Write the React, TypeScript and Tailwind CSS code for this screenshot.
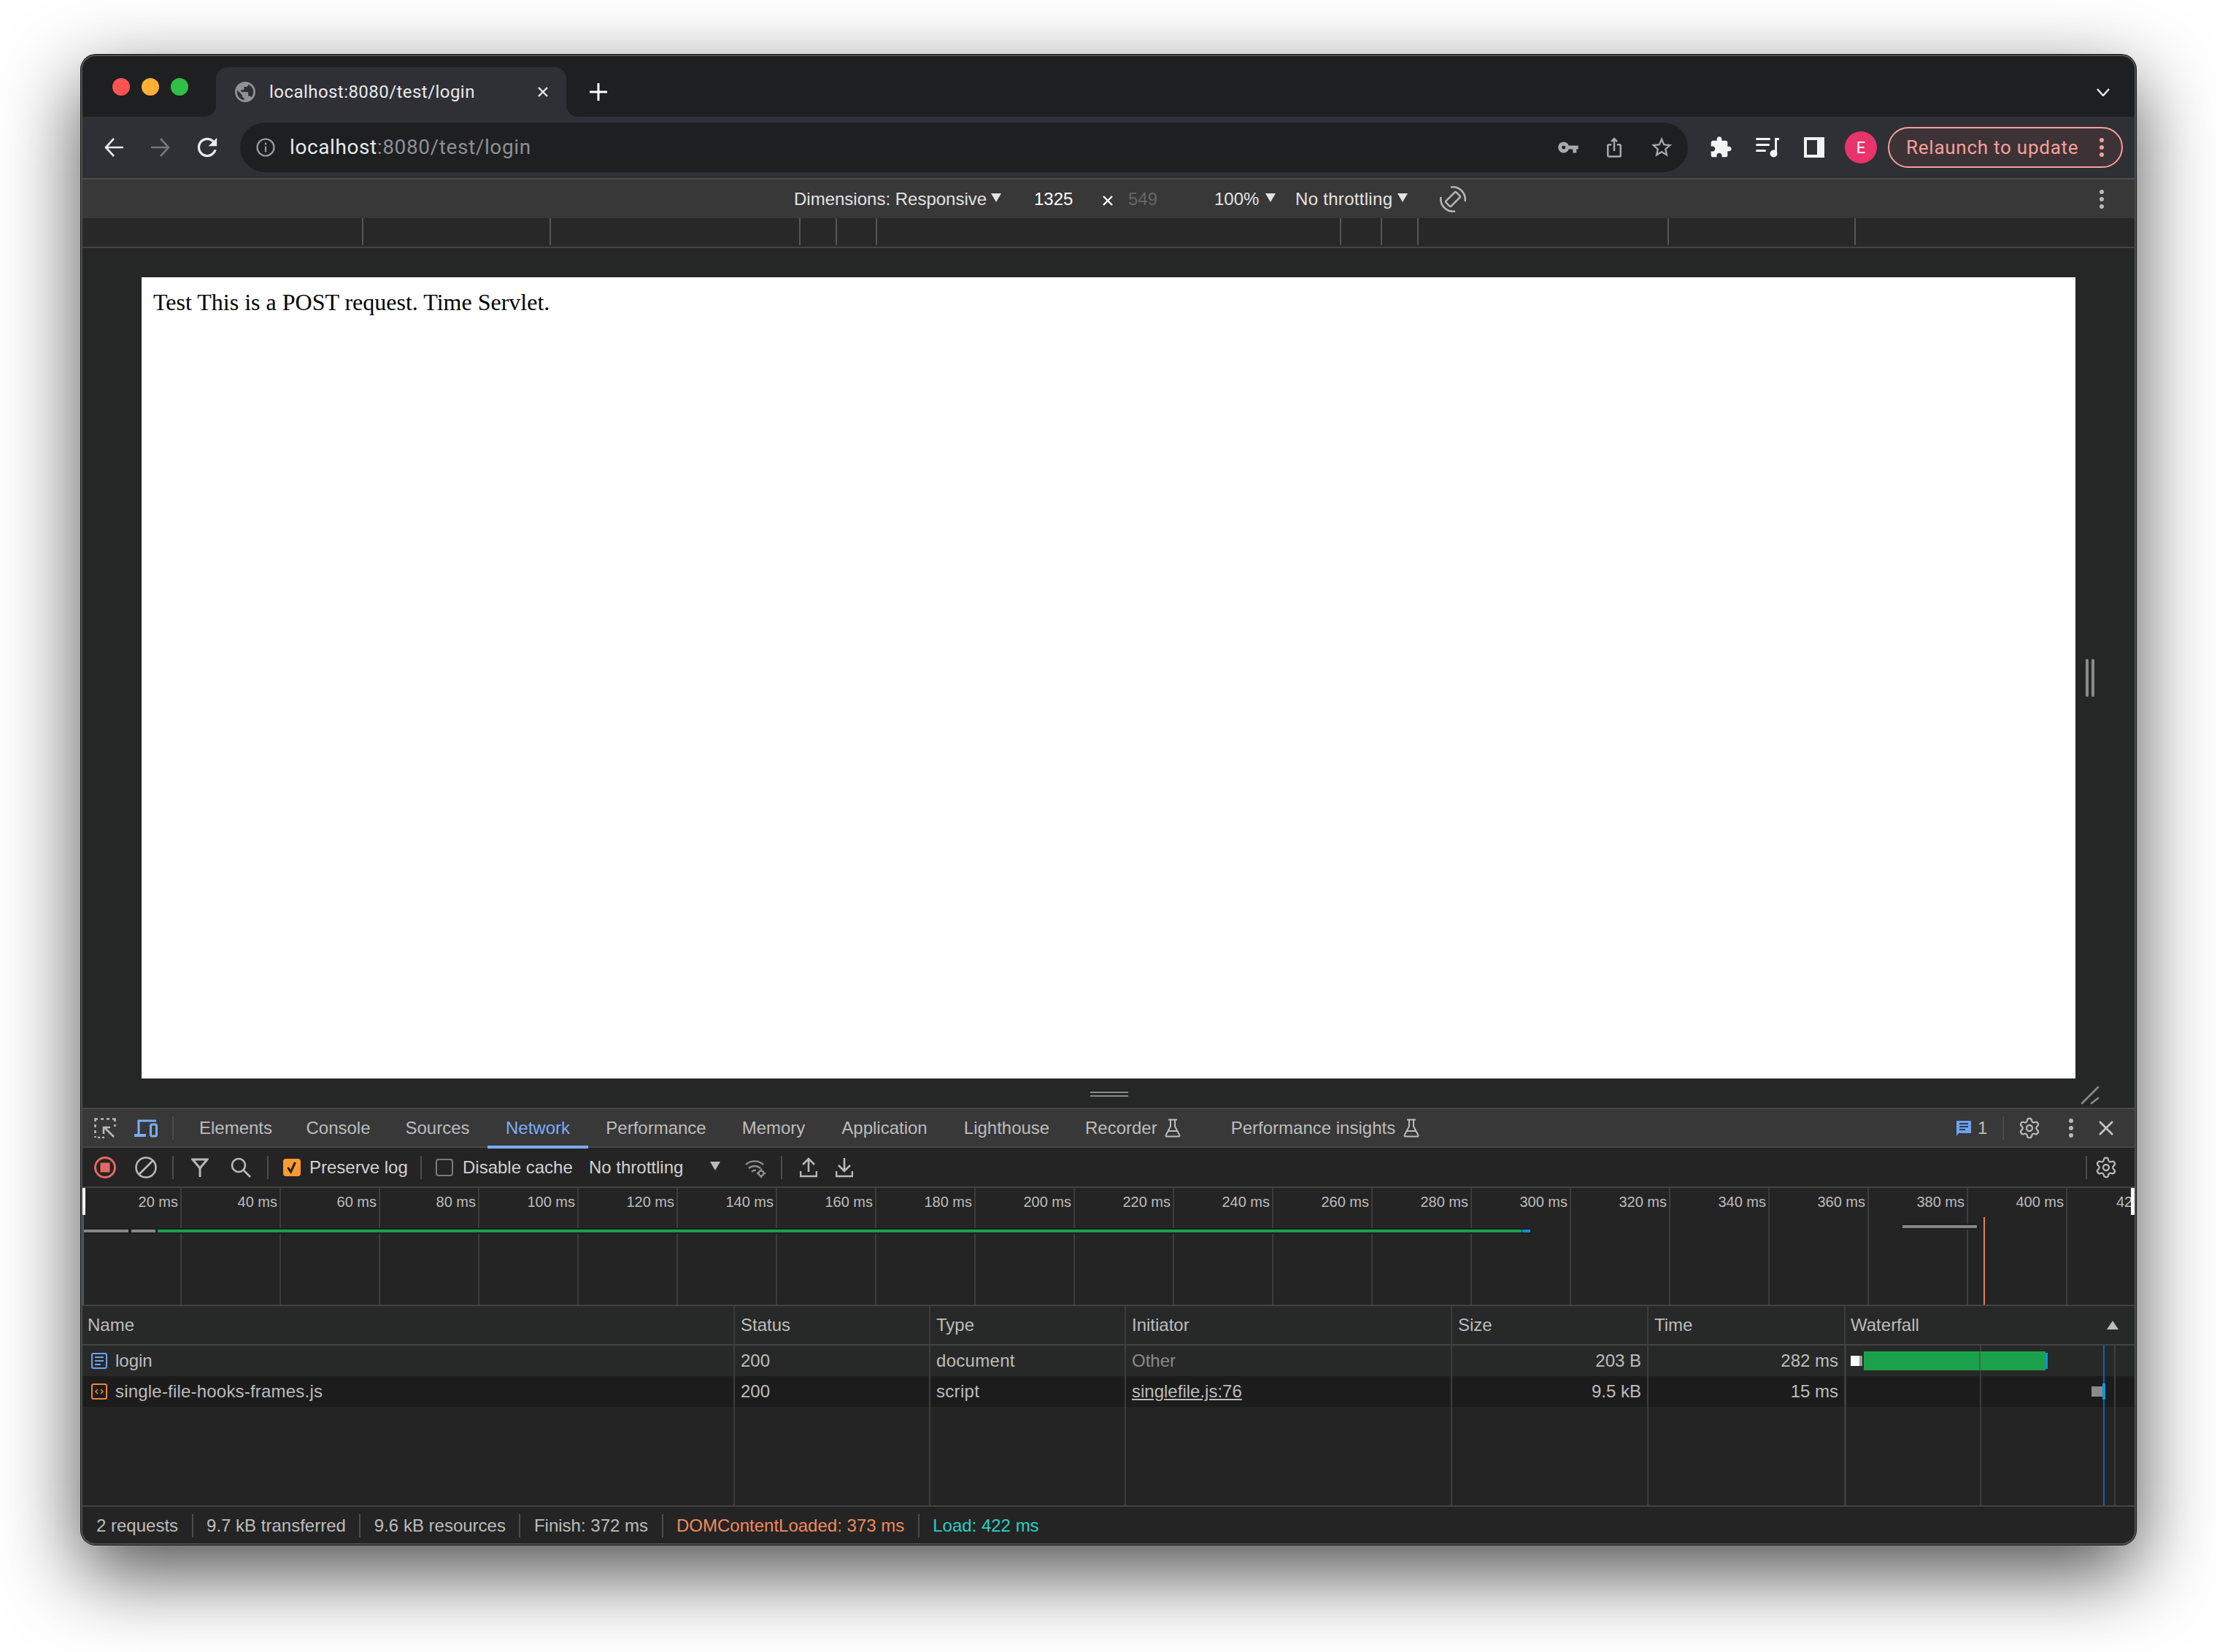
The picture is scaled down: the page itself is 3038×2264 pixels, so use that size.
import React from "react";
import { Settings } from "lucide-react";

const M = ({ d, w, c, box = "0 0 24 24", cls = "" }: { d: string; w: number; c: string; box?: string; cls?: string }) => (
  <svg width={w} height={w} viewBox={box} className={"shrink-0 " + cls}>
    <path d={d} fill={c} fillRule="evenodd" />
  </svg>
);

const Tri = ({ cls = "", c = "#e3e3e3" }: { cls?: string; c?: string }) => (
  <svg width={14} height={12} viewBox="0 0 14 12" className={"shrink-0 " + cls}>
    <polygon points="0,0 14,0 7,12" fill={c} />
  </svg>
);

const Dots = ({ c = "#b9b9b9", cls = "" }: { c?: string; cls?: string }) => (
  <svg width={8} height={28} viewBox="0 0 8 28" className={"shrink-0 " + cls}>
    <circle cx="4" cy="4" r="3" fill={c} />
    <circle cx="4" cy="14" r="3" fill={c} />
    <circle cx="4" cy="24" r="3" fill={c} />
  </svg>
);

const Sep = ({ cls = "" }: { cls?: string }) => <div className={"w-[2px] h-[32px] shrink-0 bg-[#4c4c4c] " + cls} />;

const Flask = ({ cls = "" }: { cls?: string }) => (
  <svg width={22} height={26} viewBox="0 0 22 26" fill="none" stroke="#bdbdbd" strokeWidth="2" className={"shrink-0 " + cls}>
    <path d="M5 1.5h12M8 1.5v9L1.8 22.5a1.2 1.2 0 0 0 1 2h16.4a1.2 1.2 0 0 0 1-2L14 10.5v-9M5 17h12" />
  </svg>
);

const Gear = ({ cls = "" }: { cls?: string }) => <Settings size={32} strokeWidth={1.7} color="#b9b9b9" className={"shrink-0 " + cls} />;

const rulerMarks = [496, 753, 1095, 1145, 1200, 1836, 1892, 1942, 2285, 2541];
const overviewLabels = [20, 40, 60, 80, 100, 120, 140, 160, 180, 200, 220, 240, 260, 280, 300, 320, 340, 360, 380, 400];

const tabs: [string, number][] = [
  ["Elements", 146],
  ["Console", 135],
  ["Sources", 137],
  ["Network", 138],
  ["Performance", 186],
  ["Memory", 136],
  ["Application", 168],
  ["Lighthouse", 167],
];

const cell = "flex items-center whitespace-nowrap border-r-2 border-[#3c3c3c] min-w-0";
const grid = "grid grid-cols-[896px_268px_268px_447px_269px_270px_1fr]";

function TitleBar() {
  return (
    <div className="flex h-[85px] shrink-0 bg-[#2f3035]">
      <div className="w-[185px] bg-[#1e1f21] rounded-br-[16px] flex gap-4 pl-[43px] pt-8">
        <div className="w-6 h-6 rounded-full bg-[#ff5352]" />
        <div className="w-6 h-6 rounded-full bg-[#ffb035]" />
        <div className="w-6 h-6 rounded-full bg-[#2fc145]" />
      </div>
      <div className="w-[480px] bg-[#1e1f21] pt-[17px]">
        <div className="h-[68px] rounded-t-[16px] bg-[#2f3035] flex items-center pl-[26px] pr-6">
          <M
            w={28}
            c="#8e9297"
            box="2 2 20 20"
            d="M12 2C6.48 2 2 6.48 2 12s4.48 10 10 10 10-4.48 10-10S17.52 2 12 2zm-1 17.93c-3.95-.49-7-3.85-7-7.93 0-.62.08-1.21.21-1.79L9 15v1c0 1.1.9 2 2 2v1.93zm6.9-2.54c-.26-.81-1-1.39-1.9-1.39h-1v-3c0-.55-.45-1-1-1H8v-2h2c.55 0 1-.45 1-1V7h2c1.1 0 2-.9 2-2v-.41c2.93 1.19 5 4.06 5 7.41 0 2.08-.8 3.97-2.1 5.39z"
          />
          <span className="ml-[19px] text-[24px] tracking-[0.45px] text-[#e8eaed] font-['Roboto',sans-serif] whitespace-nowrap">localhost:8080/test/login</span>
          <svg width={16} height={16} viewBox="0 0 16 16" className="ml-auto shrink-0" stroke="#e8eaed" strokeWidth="2.4">
            <path d="M2 2l12 12M14 2L2 14" />
          </svg>
        </div>
      </div>
      <div className="flex-1 bg-[#1e1f21] rounded-bl-[16px] flex items-center pt-[17px] pl-8 pr-[36px]">
        <svg width={24} height={24} viewBox="0 0 24 24" stroke="#fff" strokeWidth="3" className="shrink-0">
          <path d="M12 0v24M0 12h24" />
        </svg>
        <svg width={18} height={11} viewBox="0 0 18 11" fill="none" stroke="#e8eaed" strokeWidth="2.4" className="ml-auto shrink-0">
          <path d="M1 1l8 9 8-9" />
        </svg>
      </div>
    </div>
  );
}

function Toolbar() {
  return (
    <div className="flex items-center h-[86px] shrink-0 bg-[#2f3035] border-b-2 border-[#4b4c4f] pl-[31px]">
      <svg width={28} height={28} viewBox="0 0 28 28" fill="none" stroke="#e8eaed" strokeWidth="2.6" className="shrink-0">
        <path d="M3 14h24M14 2L3 14l11 12" />
      </svg>
      <svg width={28} height={28} viewBox="0 0 28 28" fill="none" stroke="#75767a" strokeWidth="2.6" className="ml-9 shrink-0">
        <path d="M25 14H1M14 2l11 12-11 12" />
      </svg>
      <M
        cls="ml-9"
        w={28}
        c="#e8eaed"
        box="3.5 3.5 17 17"
        d="M17.65 6.35C16.2 4.9 14.21 4 12 4c-4.42 0-7.99 3.58-7.99 8s3.57 8 7.99 8c3.73 0 6.84-2.55 7.73-6h-2.08c-.82 2.33-3.04 4-5.65 4-3.31 0-6-2.69-6-6s2.69-6 6-6c1.66 0 3.14.69 4.22 1.78L13 11h7V4l-2.35 2.35z"
      />
      <div className="ml-[31px] w-[1984px] h-[68px] rounded-full bg-[#1e1f21] flex items-center pl-[22px] pr-[19px] shrink-0">
        <svg width={26} height={26} viewBox="0 0 26 26" fill="none" stroke="#9a9ca0" strokeWidth="2.2" className="shrink-0">
          <circle cx="13" cy="13" r="11.5" />
          <path d="M13 11.5v8M13 6.5v3" />
        </svg>
        <span className="ml-5 text-[28px] tracking-[0.6px] font-['Roboto',sans-serif] whitespace-nowrap text-[#e8eaed]">
          localhost<span className="text-[#8e9094]">:8080/test/login</span>
        </span>
        <M
          cls="ml-auto"
          w={30}
          c="#a9a9aa"
          d="M12.65 10C11.83 7.67 9.61 6 7 6c-3.31 0-6 2.69-6 6s2.69 6 6 6c2.61 0 4.83-1.67 5.65-4H17v4h4v-4h2v-4H12.65zM7 14c-1.1 0-2-.9-2-2s.9-2 2-2 2 .9 2 2-.9 2-2 2z"
        />
        <M
          cls="ml-[33px]"
          w={30}
          c="#a9a9aa"
          d="M16 5l-1.42 1.42-1.59-1.59V16h-1.98V4.83L9.42 6.42 8 5l4-4 4 4zm4 5v11c0 1.1-.9 2-2 2H6c-1.11 0-2-.9-2-2V10c0-1.11.89-2 2-2h3v2H6v11h12V10h-3V8h3c1.1 0 2 .89 2 2z"
        />
        <M
          cls="ml-[33px]"
          w={34}
          c="#a9a9aa"
          d="M22 9.24l-7.19-.62L12 2 9.19 8.63 2 9.24l5.46 4.73L5.82 21 12 17.27 18.18 21l-1.63-7.03L22 9.24zM12 15.4l-3.76 2.27 1-4.28-3.32-2.88 4.38-.38L12 6.1l1.71 4.04 4.38.38-3.32 2.88 1 4.28L12 15.4z"
        />
      </div>
      <M
        cls="ml-[29px]"
        w={32}
        c="#f1f3f4"
        d="M20.5 11H19V7c0-1.1-.9-2-2-2h-4V3.5C13 2.12 11.88 1 10.5 1S8 2.12 8 3.5V5H4c-1.1 0-1.99.9-1.99 2v3.8H3.5c1.49 0 2.7 1.21 2.7 2.7s-1.21 2.7-2.7 2.7H2V20c0 1.1.9 2 2 2h3.8v-1.5c0-1.49 1.21-2.7 2.7-2.7 1.49 0 2.7 1.21 2.7 2.7V22H17c1.1 0 2-.9 2-2v-4h1.5c1.38 0 2.5-1.12 2.5-2.5S21.88 11 20.5 11z"
      />
      <svg width={32} height={28} viewBox="0 0 32 28" fill="#f1f3f4" className="ml-8 shrink-0">
        <rect x="0" y="1" width="20" height="3" rx="1.5" />
        <rect x="0" y="9" width="19" height="3" rx="1.5" />
        <rect x="0" y="17" width="14" height="3" rx="1.5" />
        <path d="M26 1h6v3h-3v19h-3z" />
        <circle cx="24.5" cy="22.5" r="5" />
      </svg>
      <svg width={28} height={28} viewBox="0 0 28 28" className="ml-[34px] shrink-0">
        <path fillRule="evenodd" fill="#f1f3f4" d="M0 0h28v28H0zM4 4v20h14V4z" />
      </svg>
      <div className="ml-7 w-11 h-11 rounded-full bg-[#e8336b] flex items-center justify-center text-white text-[22px] font-['Roboto',sans-serif] shrink-0">E</div>
      <div className="ml-[15px] w-[322px] h-[56px] rounded-full border-2 border-[#f5a09b] bg-[#3d3337] flex items-center pl-[23px] text-[#f5a09b] text-[26px] tracking-[0.75px] font-['Roboto',sans-serif] whitespace-nowrap shrink-0">
        Relaunch to update
        <Dots c="#f5a09b" cls="ml-auto mr-[23px]" />
      </div>
    </div>
  );
}

function DeviceBar() {
  return (
    <div className="flex items-center h-[53px] shrink-0 bg-[#383838] pl-[977px] pr-[43px] text-[24px] text-[#e3e3e3] font-['Liberation_Sans',sans-serif] whitespace-nowrap">
      <span className="w-[263px] shrink-0">Dimensions: Responsive</span>
      <Tri cls="ml-[7px] -mt-1" />
      <span className="ml-[45px] w-[52px] shrink-0 text-white">1325</span>
      <svg width={14} height={14} viewBox="0 0 14 14" stroke="#fff" strokeWidth="2.4" className="ml-[42px] shrink-0 mt-1">
        <path d="M1 1l12 12M13 1L1 13" />
      </svg>
      <span className="ml-[21px] w-[39px] shrink-0 text-[#666]">549</span>
      <span className="ml-[79px] w-[60px] shrink-0">100%</span>
      <Tri cls="ml-[10px] -mt-1" />
      <span className="ml-[27px] w-[131px] shrink-0 tracking-[0.3px]">No throttling</span>
      <Tri cls="ml-[9px] -mt-1" />
      <svg width={38} height={38} viewBox="0 0 38 38" fill="none" stroke="#b5b5b5" strokeWidth="2.6" className="ml-[43px] shrink-0">
        <rect x="14" y="9" width="10" height="20" rx="2" transform="rotate(45 19 19)" />
        <path d="M16 2.5a17 17 0 0 1 19.5 19.5M22 35.500A17 17 0 0 1 2.500 16" />
      </svg>
      <Dots cls="ml-auto" />
    </div>
  );
}

function Ruler() {
  return (
    <div className="flex h-[41px] shrink-0 bg-[#272827] border-b-2 border-[#434343]">
      {rulerMarks.map((x, i) => (
        <div
          key={x}
          className="h-[37px] shrink-0 border-r-2 border-[#565656]"
          style={{ width: x + 2 - (i === 0 ? 111 : rulerMarks[i - 1] + 2) }}
        />
      ))}
    </div>
  );
}

function PageArea() {
  return (
    <div className="flex flex-col h-[1178px] shrink-0 bg-[#252626] pt-10">
      <div className="flex h-[1098px] shrink-0 pl-[83px]">
        <div className="w-[2650px] bg-white p-4 text-[32px] leading-[37px] text-black font-['Liberation_Serif',serif] whitespace-nowrap">
          Test This is a POST request. Time Servlet.
        </div>
        <div className="flex flex-1 items-center gap-1 pl-[14px]">
          <div className="w-1 h-[52px] rounded-[2px] bg-[#8a8a8a]" />
          <div className="w-1 h-[52px] rounded-[2px] bg-[#8a8a8a]" />
        </div>
      </div>
      <div className="flex flex-1 pl-[1383px] pt-[18px]">
        <div className="w-[52px] h-[7px] border-y-2 border-[#8a8a8a] shrink-0" />
        <svg width={26} height={26} viewBox="0 0 26 26" stroke="#8a8a8a" strokeWidth="2.6" strokeLinecap="round" className="ml-[1305px] -mt-2 shrink-0">
          <path d="M2 24L24 2M15 24l9-7" />
        </svg>
      </div>
    </div>
  );
}

function DevtoolsTabs() {
  return (
    <div className="flex items-center h-[55px] shrink-0 bg-[#383838] border-y-2 border-[#474747] pl-[18px] pr-[30px] text-[24px] text-[#bdbdbd] font-['Liberation_Sans',sans-serif] whitespace-nowrap">
      <svg width={30} height={28} viewBox="0 0 30 28" fill="none" stroke="#b9b9b9" strokeWidth="2.6" className="shrink-0">
        <path d="M1.5 27v-2M1.5 21v-4M1.5 13V9M1.5 5V1.5H5M9 1.5h4M17 1.5h4M25 1.5h3.5V5M28.5 9v3M5 27h3M11 27h3" />
        <path d="M27 26L14 13M13 22v-9h9" />
      </svg>
      <svg width={32} height={26} viewBox="0 0 32 26" className="ml-[25px] shrink-0" fill="none">
        <path d="M30 3H6v19" stroke="#7cacf8" strokeWidth="3" />
        <rect x="0" y="21" width="16" height="4" fill="#7cacf8" />
        <rect x="22.5" y="8" width="8" height="16" rx="2" stroke="#7cacf8" strokeWidth="3" />
      </svg>
      <Sep cls="ml-5 mr-3" />
      {tabs.map(([t, w]) => (
        <div
          key={t}
          className={"relative self-stretch flex items-center justify-center shrink-0 " + (t === "Network" ? "text-[#7cacf8]" : "")}
          style={{ width: w }}
        >
          {t}
          {t === "Network" && <div className="absolute left-0 right-0 -bottom-[3px] h-1 bg-[#7cacf8]" />}
        </div>
      ))}
      <div className="flex items-center pl-6 shrink-0">
        Recorder
        <Flask cls="ml-[10px]" />
      </div>
      <div className="flex items-center ml-[69px] shrink-0">
        Performance insights
        <Flask cls="ml-[11px]" />
      </div>
      <svg width={20} height={24} viewBox="0 0 20 24" className="ml-auto shrink-0">
        <path d="M0 2h20v17H3l-3 4z" fill="#6ea1ef" />
        <path d="M4 6h12M4 10h12M4 14h8" stroke="#2b3a55" strokeWidth="2" />
      </svg>
      <span className="ml-[9px] w-3 shrink-0">1</span>
      <Sep cls="ml-[22px]" />
      <Gear cls="ml-[19px]" />
      <Dots cls="ml-[37px]" />
      <svg width={22} height={22} viewBox="0 0 22 22" stroke="#c4c4c4" strokeWidth="2.6" className="ml-[33px] shrink-0">
        <path d="M2 2l18 18M20 2L2 20" />
      </svg>
    </div>
  );
}

function NetworkToolbar() {
  return (
    <div className="flex items-center h-[55px] shrink-0 bg-[#242424] border-b-2 border-[#434343] pl-[18px] pr-[25px] text-[24px] text-[#d2d2d2] font-['Liberation_Sans',sans-serif] whitespace-nowrap">
      <svg width={30} height={30} viewBox="0 0 30 30" fill="none" className="shrink-0">
        <circle cx="15" cy="15" r="13.5" stroke="#e46962" strokeWidth="3" />
        <rect x="8.5" y="8.5" width="13" height="13" fill="#e46962" />
      </svg>
      <svg width={30} height={30} viewBox="0 0 30 30" fill="none" stroke="#b9b9b9" strokeWidth="2.6" className="ml-[26px] shrink-0">
        <circle cx="15" cy="15" r="13.5" />
        <path d="M24.5 5.5l-19 19" />
      </svg>
      <Sep cls="ml-[21px]" />
      <svg width={24} height={26} viewBox="0 0 24 26" fill="none" stroke="#b9b9b9" strokeWidth="3" className="ml-6 shrink-0">
        <path d="M2 2h20l-10 12zM12 13v13" />
      </svg>
      <svg width={28} height={28} viewBox="0 0 28 28" fill="none" stroke="#b9b9b9" strokeWidth="2.6" className="ml-[30px] shrink-0">
        <circle cx="11" cy="11" r="9" />
        <path d="M17.5 17.5L27 27" />
      </svg>
      <Sep cls="ml-[22px]" />
      <div className="ml-5 w-6 h-6 rounded-[4px] bg-[#ff9a2e] flex items-center justify-center shrink-0">
        <svg width={16} height={18} viewBox="0 0 16 18" fill="none" stroke="#202020" strokeWidth="3">
          <path d="M2.5 9l4 6 6-13" />
        </svg>
      </div>
      <span className="ml-3 w-[133px] shrink-0">Preserve log</span>
      <Sep cls="ml-[19px]" />
      <div className="ml-[19px] w-6 h-6 rounded-[4px] border-2 border-[#7a7a7a] shrink-0" />
      <span className="ml-[13px] w-[150px] shrink-0">Disable cache</span>
      <span className="ml-[23px] w-[132px] shrink-0">No throttling</span>
      <Tri cls="ml-[34px] -mt-1" c="#b9b9b9" />
      <svg width={28} height={28} viewBox="0 0 28 28" fill="none" stroke="#8f8f8f" strokeWidth="2.4" className="ml-[34px] shrink-0">
        <path d="M1 10a18 18 0 0 1 24 0M5 15a12 12 0 0 1 16 0M9 20a6 6 0 0 1 6-2" />
        <circle cx="22" cy="22" r="3.5" />
        <path d="M22 15.5v3M22 25.5v2.5M16 22h2.5M25.5 22h2.5" />
      </svg>
      <Sep cls="ml-[21px]" />
      <svg width={24} height={28} viewBox="0 0 24 28" fill="none" stroke="#b9b9b9" strokeWidth="2.6" className="ml-6 shrink-0">
        <path d="M12 20V3M4 10l8-8 8 8M1 19v7h22v-7" />
      </svg>
      <svg width={24} height={28} viewBox="0 0 24 28" fill="none" stroke="#b9b9b9" strokeWidth="2.6" className="ml-[25px] shrink-0">
        <path d="M12 1v17M4 11l8 8 8-8M1 19v7h22v-7" />
      </svg>
      <Sep cls="ml-auto" />
      <Gear cls="ml-[10px]" />
    </div>
  );
}

function Overview() {
  return (
    <div className="relative flex h-[162px] shrink-0 bg-[#242424] border-b-2 border-[#434343] text-[20px] leading-[30px] text-[#bdbdbd] font-['Liberation_Sans',sans-serif] whitespace-nowrap overflow-hidden">
      <div className="w-[138px] shrink-0 h-full border-r-2 border-[#3c3c3c] text-right pr-[3px] pt-1">20 ms</div>
      {overviewLabels.slice(1).map((n) => (
        <div key={n} className="w-[136px] shrink-0 h-full border-r-2 border-[#3c3c3c] text-right pr-[3px] pt-1">
          {n} ms
        </div>
      ))}
      <div className="w-[87px] shrink-0 h-full overflow-hidden pl-[67px] pt-1">420 ms</div>

      <div className="absolute left-0 top-[55px] w-[1989px] h-2 bg-[#1e1e1e]" />
      <div className="absolute left-[2px] top-[57px] w-[63px] h-1 bg-[#868686]" />
      <div className="absolute left-[69px] top-[57px] w-[33px] h-1 bg-[#868686]" />
      <div className="absolute left-[105px] top-[57px] w-[1869px] h-1 bg-[#1aa04a]" />
      <div className="absolute left-[1975px] top-[57px] w-[11px] h-1 bg-[#0a8ed8]" />
      <div className="absolute left-[2494px] top-[49px] w-[106px] h-2 bg-[#1e1e1e]" />
      <div className="absolute left-[2496px] top-[51px] w-[102px] h-1 bg-[#868686]" />
      <div className="absolute left-[2607px] top-10 bottom-0 w-[2px] bg-[#e8804e]" />
      <div className="absolute left-[2px] top-0 bottom-0 w-[2px] bg-[#48566a]" />
      <div className="absolute left-[2px] top-0 w-1 h-[37px] bg-white" />
      <div className="absolute left-[2809px] top-0 w-[5px] h-[37px] bg-white" />
    </div>
  );
}

function Table() {
  return (
    <div className="flex flex-col h-[275px] shrink-0 bg-[#242424] text-[24px] text-[#bdbdbd] font-['Liberation_Sans',sans-serif]">
      <div className={grid + " h-[54px] shrink-0 bg-[#272928] border-b-2 border-[#434343]"}>
        <div className={cell + " pl-[9px]"}>Name</div>
        <div className={cell + " pl-2"}>Status</div>
        <div className={cell + " pl-2"}>Type</div>
        <div className={cell + " pl-2"}>Initiator</div>
        <div className={cell + " pl-2"}>Size</div>
        <div className={cell + " pl-2"}>Time</div>
        <div className="flex items-center pl-[7px] pr-6">
          Waterfall
          <svg width={16} height={12} viewBox="0 0 16 12" className="ml-auto shrink-0">
            <polygon points="8,0 16,12 0,12" fill="#bdbdbd" />
          </svg>
        </div>
      </div>
      <div className="relative flex flex-col flex-1">
        <div className={grid + " h-[42px] shrink-0 bg-[#272928]"}>
          <div className={cell + " pl-[14px]"}>
            <svg width={22} height={22} viewBox="0 0 22 22" fill="none" className="shrink-0">
              <rect x="1" y="1" width="20" height="20" rx="2" stroke="#6ea1ef" strokeWidth="2" />
              <path d="M5 6h12M5 11h12M5 16h8" stroke="#6ea1ef" strokeWidth="2" />
            </svg>
            <span className="ml-[11px]">login</span>
          </div>
          <div className={cell + " pl-2"}>200</div>
          <div className={cell + " pl-2 tracking-[0.3px]"}>document</div>
          <div className={cell + " pl-2 text-[#8a8a8a]"}>Other</div>
          <div className={cell + " justify-end pr-2"}>203 B</div>
          <div className={cell + " justify-end pr-2"}>282 ms</div>
          <div />
        </div>
        <div className={grid + " h-[42px] shrink-0 bg-[#1c1c1c]"}>
          <div className={cell + " pl-[14px]"}>
            <svg width={22} height={22} viewBox="0 0 22 22" fill="none" className="shrink-0">
              <rect x="1" y="1" width="20" height="20" rx="2" stroke="#e8873a" strokeWidth="2" />
              <path d="M9 8l-3 3 3 3M13 8l3 3-3 3" stroke="#e8873a" strokeWidth="1.6" />
            </svg>
            <span className="ml-[11px] tracking-[0.2px]">single-file-hooks-frames.js</span>
          </div>
          <div className={cell + " pl-2"}>200</div>
          <div className={cell + " pl-2 tracking-[0.3px]"}>script</div>
          <div className={cell + " pl-2 underline"}>singlefile.js:76</div>
          <div className={cell + " justify-end pr-2"}>9.5 kB</div>
          <div className={cell + " justify-end pr-2"}>15 ms</div>
          <div />
        </div>
        <div className={grid + " flex-1"}>
          <div className={cell} />
          <div className={cell} />
          <div className={cell} />
          <div className={cell} />
          <div className={cell} />
          <div className={cell} />
          <div />
        </div>
        <div className="absolute left-[2418px] top-0 bottom-0 w-[1px] bg-[#3c3c3c]" />
        <div className="absolute left-[2602px] top-0 bottom-0 w-[2px] bg-[#3c3c3c]" />
        <div className="absolute left-[2786px] top-0 bottom-0 w-[2px] bg-[#3c3c3c]" />
        <div className="absolute left-[2425px] top-[14px] w-4 h-[14px] bg-[#9a9a9a]" />
        <div className="absolute left-[2425px] top-[14px] w-3 h-[14px] bg-white" />
        <div className="absolute left-[2443px] top-2 w-[249px] h-[26px] bg-[#1ba14b]" />
        <div className="absolute left-[2601px] top-2 w-[2px] h-[26px] bg-[#3f6b4e]" />
        <div className="absolute left-[2692px] top-[10px] w-[3px] h-[22px] bg-[#0a96e0]" />
        <div className="absolute left-[2755px] top-[56px] w-[15px] h-[14px] bg-[#8a8a8a]" />
        <div className="absolute left-[2771px] top-0 bottom-0 w-[2px] bg-[#0b63c9]" />
        <div className="absolute left-[2770px] top-[52px] w-1 h-[22px] bg-[#0a96e0]" />
      </div>
      <div className="h-[2px] shrink-0 bg-[#434343]" />
    </div>
  );
}

function StatusBar() {
  const item = "px-[18.5px] shrink-0";
  return (
    <div className="flex items-center flex-1 bg-[#242424] pl-[2.5px] text-[24px] text-[#bdbdbd] font-['Liberation_Sans',sans-serif] whitespace-nowrap">
      <span className={item}>2 requests</span>
      <Sep />
      <span className={item}>9.7 kB transferred</span>
      <Sep />
      <span className={item}>9.6 kB resources</span>
      <Sep />
      <span className={item}>Finish: 372 ms</span>
      <Sep />
      <span className={item + " text-[#f08a5d]"}>DOMContentLoaded: 373 ms</span>
      <Sep />
      <span className={item + " text-[#2ad0c4]"}>Load: 422 ms</span>
    </div>
  );
}

export default function App() {
  return (
    <div className="w-[3038px] h-[2264px] overflow-hidden bg-white pl-[111px] pt-[75px]">
      <div className="relative w-[2816px] h-[2042px] rounded-[20px] shadow-[0_0_0_1px_#111,0_38px_110px_0_rgba(0,0,0,0.7)]">
        <div className="flex flex-col w-full h-full rounded-[20px] overflow-hidden bg-[#242424]">
          <TitleBar />
          <Toolbar />
          <DeviceBar />
          <Ruler />
          <PageArea />
          <DevtoolsTabs />
          <NetworkToolbar />
          <Overview />
          <Table />
          <StatusBar />
        </div>
        <div className="absolute inset-0 rounded-[20px] border-2 border-[#505051] pointer-events-none" />
      </div>
    </div>
  );
}
